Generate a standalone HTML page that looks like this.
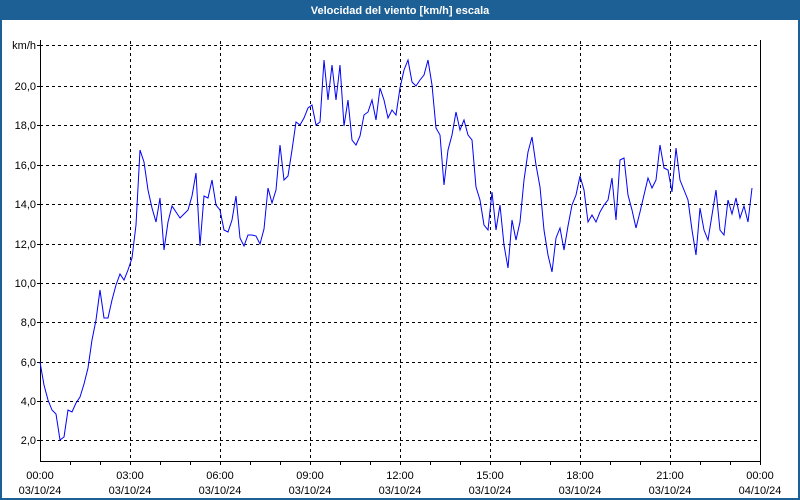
<!DOCTYPE html>
<html><head><style>
html,body{margin:0;padding:0;width:800px;height:500px;overflow:hidden;background:#fff}
svg{display:block}
text{font-family:"Liberation Sans","DejaVu Sans",sans-serif;font-size:11px;fill:#000}
</style></head><body>
<svg width="800" height="500" viewBox="0 0 800 500" xmlns="http://www.w3.org/2000/svg">
<rect x="0" y="0" width="800" height="500" fill="#fff"/>
<rect x="0" y="0" width="800" height="20" fill="#1d6096"/>
<rect x="0" y="0" width="2" height="500" fill="#1d6096"/>
<rect x="798" y="0" width="2" height="500" fill="#1d6096"/>
<rect x="0" y="498" width="800" height="2" fill="#1d6096"/>
<text x="400" y="14" text-anchor="middle" style="fill:#fff;font-weight:bold;font-size:11px">Velocidad del viento [km/h] escala</text>
<g stroke="#000" stroke-width="1" stroke-dasharray="3,3" shape-rendering="crispEdges">
<line x1="40" y1="45.5" x2="760" y2="45.5"/>
<line x1="40" y1="86.5" x2="760" y2="86.5"/>
<line x1="40" y1="125.5" x2="760" y2="125.5"/>
<line x1="40" y1="165.5" x2="760" y2="165.5"/>
<line x1="40" y1="204.5" x2="760" y2="204.5"/>
<line x1="40" y1="244.5" x2="760" y2="244.5"/>
<line x1="40" y1="283.5" x2="760" y2="283.5"/>
<line x1="40" y1="322.5" x2="760" y2="322.5"/>
<line x1="40" y1="362.5" x2="760" y2="362.5"/>
<line x1="40" y1="401.5" x2="760" y2="401.5"/>
<line x1="40" y1="440.5" x2="760" y2="440.5"/>
<line x1="130.5" y1="41" x2="130.5" y2="462"/>
<line x1="220.5" y1="41" x2="220.5" y2="462"/>
<line x1="310.5" y1="41" x2="310.5" y2="462"/>
<line x1="400.5" y1="41" x2="400.5" y2="462"/>
<line x1="490.5" y1="41" x2="490.5" y2="462"/>
<line x1="580.5" y1="41" x2="580.5" y2="462"/>
<line x1="670.5" y1="41" x2="670.5" y2="462"/>
</g>
<g stroke="#000" stroke-width="1" shape-rendering="crispEdges">
<line x1="40.5" y1="40" x2="40.5" y2="462"/>
<line x1="760.5" y1="40" x2="760.5" y2="462"/>
<line x1="40" y1="461.5" x2="761" y2="461.5"/>
<path d="M37 45.5h3M37 86.5h3M37 125.5h3M37 165.5h3M37 204.5h3M37 244.5h3M37 283.5h3M37 322.5h3M37 362.5h3M37 401.5h3M37 440.5h3"/>
<path d="M70.5 462v3M100.5 462v3M130.5 462v3M160.5 462v3M190.5 462v3M220.5 462v3M250.5 462v3M280.5 462v3M310.5 462v3M340.5 462v3M370.5 462v3M400.5 462v3M430.5 462v3M460.5 462v3M490.5 462v3M520.5 462v3M550.5 462v3M580.5 462v3M610.5 462v3M640.5 462v3M670.5 462v3M700.5 462v3M730.5 462v3M760.5 462v3"/>
</g>
<g text-anchor="end">
<text x="36" y="49">km/h</text>
<text x="36" y="90">20,0</text>
<text x="36" y="129">18,0</text>
<text x="36" y="169">16,0</text>
<text x="36" y="208">14,0</text>
<text x="36" y="248">12,0</text>
<text x="36" y="287">10,0</text>
<text x="36" y="326">8,0</text>
<text x="36" y="366">6,0</text>
<text x="36" y="405">4,0</text>
<text x="36" y="444">2,0</text>
</g>
<g text-anchor="middle">
<text x="40" y="479">00:00</text><text x="40" y="494">03/10/24</text>
<text x="130" y="479">03:00</text><text x="130" y="494">03/10/24</text>
<text x="220" y="479">06:00</text><text x="220" y="494">03/10/24</text>
<text x="310" y="479">09:00</text><text x="310" y="494">03/10/24</text>
<text x="400" y="479">12:00</text><text x="400" y="494">03/10/24</text>
<text x="490" y="479">15:00</text><text x="490" y="494">03/10/24</text>
<text x="580" y="479">18:00</text><text x="580" y="494">03/10/24</text>
<text x="670" y="479">21:00</text><text x="670" y="494">03/10/24</text>
<text x="760" y="479">00:00</text><text x="760" y="494">04/10/24</text>
</g>
<polyline fill="none" stroke="#0000ff" stroke-width="1" points="40,362 44,385 48,400 52,410 56,414 60,440 64,437 68,410 72,412 76,403 80,397 84,384 88,368 92,340 96,320 100,290 104,318 108,318 112,300 116,285 120,274 124,280 128,270 132,258 136,225 140,150 144,162 148,190 152,208 156,222 160,198 164,250 168,222 172,206 176,212 180,218 184,214 188,210 192,196 196,173 200,246 204,196 208,198 212,180 216,205 220,210 224,230 228,232 232,220 236,196 240,238 244,246 248,235 252,235 256,236 260,244 264,229 268,188 272,203 276,190 280,145 284,180 288,176 292,150 296,122 300,125 304,118 308,108 312,105 316,125 320,122 324,60 328,100 332,65 336,100 340,65 344,126 348,100 352,140 356,145 360,136 364,115 368,112 372,100 376,120 380,88 384,100 388,118 392,110 396,115 400,88 404,70 408,60 412,82 416,86 420,80 424,75 428,60 432,85 436,128 440,135 444,185 448,150 452,135 456,112 460,130 464,120 468,135 472,140 476,187 480,200 484,225 488,230 492,192 496,230 500,205 504,245 508,268 512,220 516,240 520,222 524,180 528,152 532,137 536,165 540,187 544,230 548,255 552,272 556,238 560,228 564,250 568,226 572,205 576,195 580,176 584,190 588,222 592,215 596,222 600,212 604,205 608,200 612,178 616,220 620,160 624,158 628,195 632,210 636,228 640,212 644,195 648,178 652,188 656,180 660,145 664,168 668,170 672,192 676,148 680,180 684,190 688,200 692,230 696,255 700,208 704,230 708,240 712,215 716,190 720,230 724,235 728,200 732,214 736,198 740,218 744,206 748,222 752,188"/>
</svg>
</body></html>
